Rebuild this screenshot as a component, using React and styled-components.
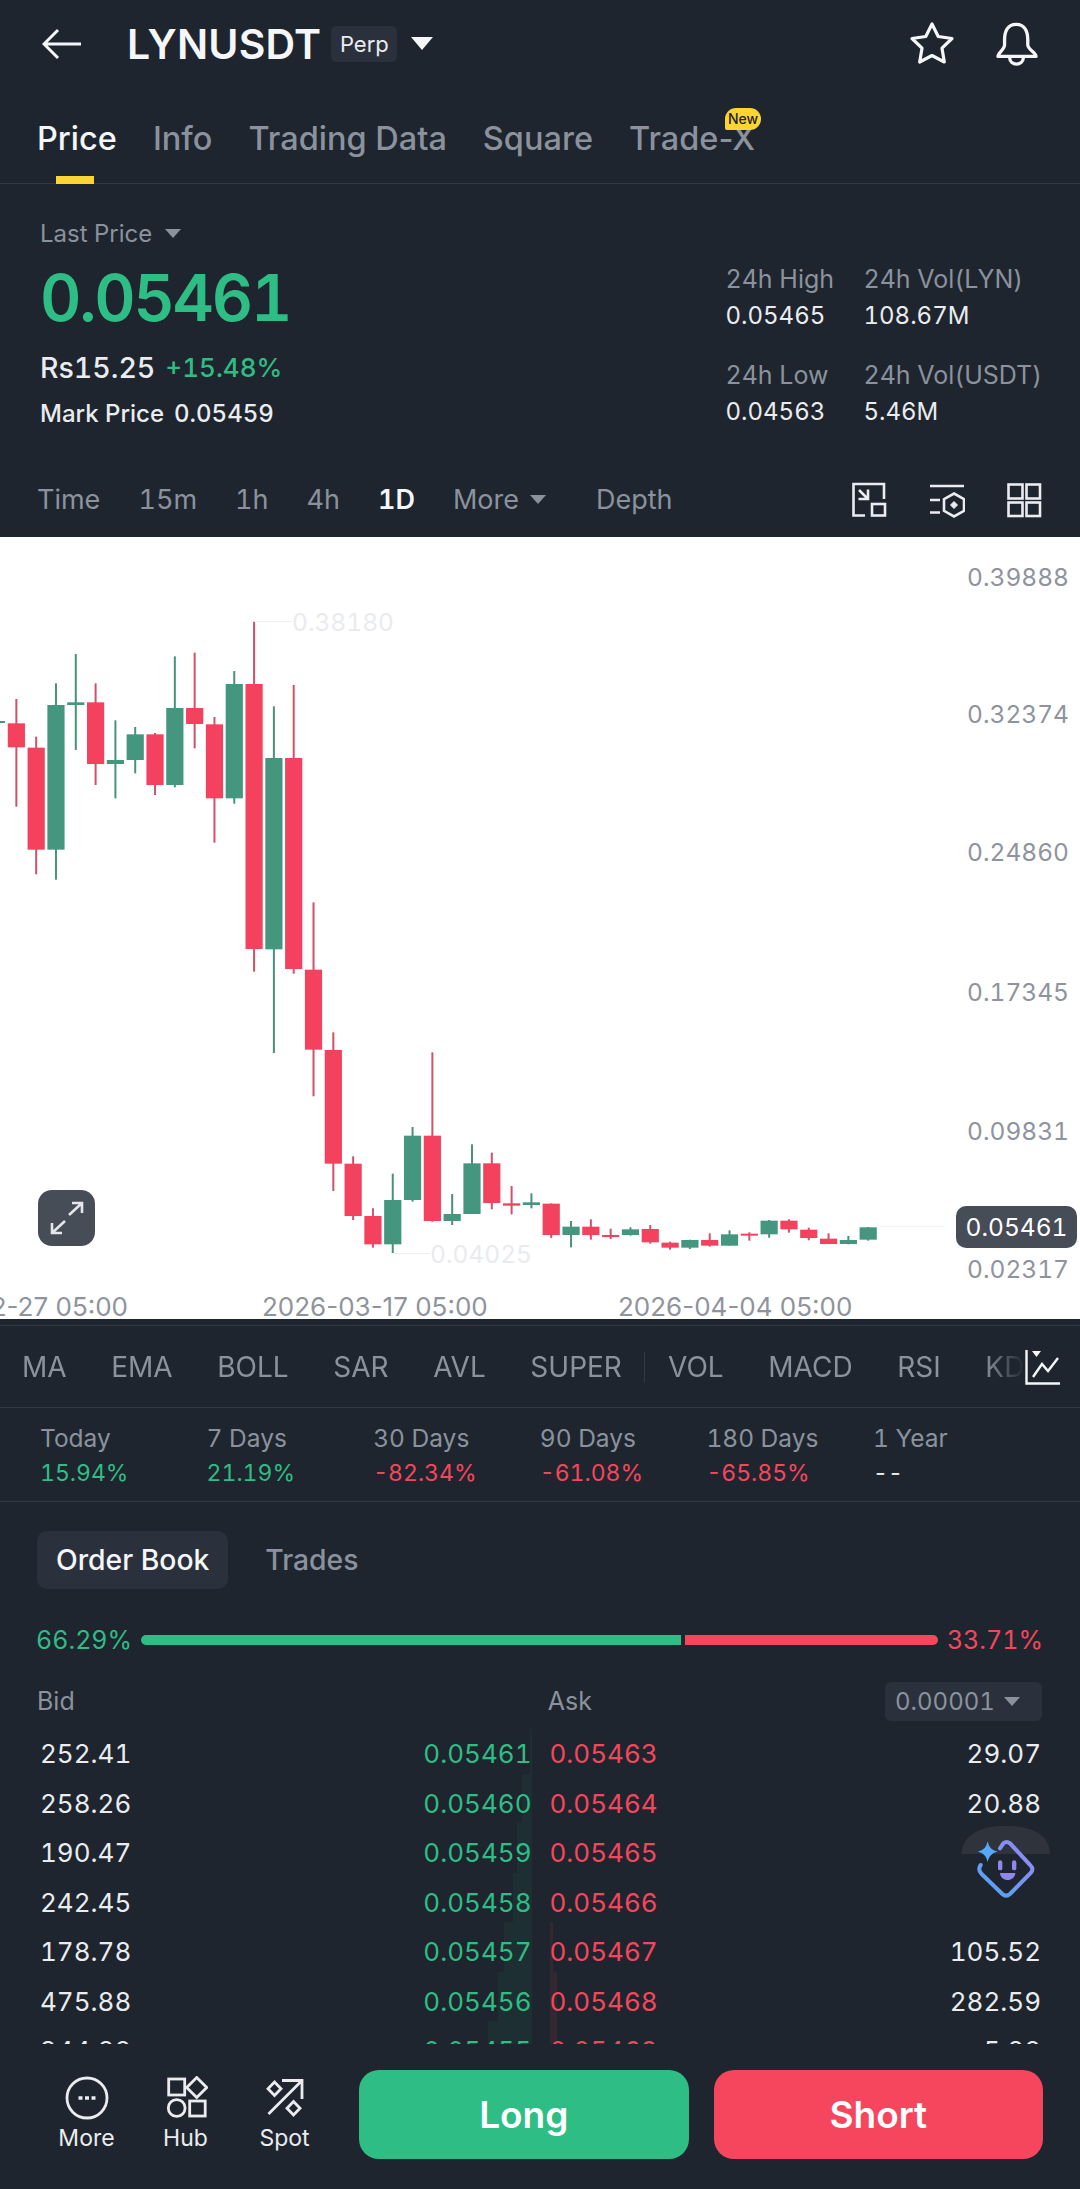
import React from 'react';
import styled, { createGlobalStyle } from 'styled-components';

const BG = '#1e252e';
const GREEN = '#2ebd85';
const RED = '#f6465d';
const GREY = '#8b929d';
const LIGHT = '#eaecef';
const CANDLE_GREEN = '#45967f';
const CANDLE_RED = '#f4425e';

const GlobalStyle = createGlobalStyle`
  html, body { margin: 0; padding: 0; background: ${BG}; }
  * { box-sizing: border-box; }
  body {
    font-family: Inter, "Liberation Sans", sans-serif;
    font-variant-numeric: tabular-nums;
    color: ${LIGHT};
  }
`;

const Page = styled.div`
  width: 1080px;
  height: 2189px;
  overflow: hidden;
  display: flex;
  flex-direction: column;
  background: ${BG};
`;

const Caret = styled.span`
  display: inline-block;
  width: 0;
  height: 0;
  border-left: ${(p) => p.$size}px solid transparent;
  border-right: ${(p) => p.$size}px solid transparent;
  border-top: ${(p) => p.$size * 1.2}px solid ${(p) => p.$color || GREY};
`;

/* header */
const Header = styled.header`
  height: 88px;
  padding: 0 39px 0 42px;
  display: flex;
  align-items: center;
`;

const Title = styled.h1`
  margin: 0 10px 0 45px;
  font-size: 41px;
  font-weight: 600;
  letter-spacing: 0.2px;
  color: #f5f6f8;
`;

const Badge = styled.span`
  height: 36px;
  width: 66px;
  margin-right: 14px;
  border-radius: 6px;
  background: #2a313c;
  color: ${LIGHT};
  font-size: 22px;
  display: flex;
  align-items: center;
  justify-content: center;
`;

const HeaderIcons = styled.div`
  margin-left: auto;
  display: flex;
  gap: 37px;
`;

/* tabs */
const Tabs = styled.nav`
  height: 96px;
  padding: 0 37px;
  display: flex;
  gap: 36px;
  border-bottom: 1px solid #333a45;
`;

const Tab = styled.div`
  position: relative;
  padding-top: 32px;
  font-size: 32.5px;
  line-height: 38px;
  font-weight: 500;
  font-variant-numeric: normal;
  color: ${(p) => (p.$active ? '#f5f6f8' : GREY)};
`;

const TabMark = styled.span`
  position: absolute;
  left: 19px;
  bottom: -1px;
  width: 38px;
  height: 8px;
  background: #fcd535;
`;

const NewTag = styled.span`
  position: absolute;
  right: -6px;
  top: 20px;
  width: 36px;
  height: 22px;
  border-radius: 11px 11px 11px 2px;
  background: #fcd535;
  color: #1e2329;
  font-size: 14px;
  font-weight: 500;
  line-height: 22px;
  text-align: center;
`;

/* price block */
const Stats = styled.section`
  height: 278px;
  padding: 35px 38px 0 40px;
  display: flex;
  justify-content: space-between;
`;

const LastPrice = styled.div`
  display: flex;
  align-items: center;
  gap: 13px;
  height: 30px;
  font-size: 24px;
  color: ${GREY};
`;

const BigPrice = styled.div`
  margin-top: 10px;
  font-size: 64px;
  line-height: 78px;
  font-weight: 600;
  letter-spacing: -2.2px;
  color: ${GREEN};
`;

const Fiat = styled.div`
  margin-top: 13px;
  height: 36px;
  display: flex;
  align-items: center;
  gap: 10px;
  font-size: 28.5px;
  font-weight: 500;
`;

const Change = styled.span`
  color: ${GREEN};
  font-size: 26px;
`;

const Mark = styled.div`
  margin-top: 12px;
  height: 32px;
  display: flex;
  align-items: center;
  gap: 10px;
  font-size: 24px;
  font-weight: 500;
`;

const RightStats = styled.div`
  padding-top: 43px;
  display: grid;
  grid-template-columns: 138px auto;
  row-gap: 25px;
  align-content: start;
`;

const StatCell = styled.div`
  display: flex;
  flex-direction: column;
  gap: 3px;
  font-size: 24px;
  line-height: 34px;
  color: ${LIGHT};
`;

const StatLabel = styled.span`
  font-size: 25px;
  color: ${GREY};
`;

/* time frames */
const TimeBar = styled.div`
  height: 76px;
  padding: 1px 38px 0 37px;
  display: flex;
  align-items: center;
  gap: 38px;
  font-size: 27px;
  color: ${GREY};
`;

const TimeItem = styled.span`
  display: flex;
  align-items: center;
  gap: 11px;
  color: ${(p) => (p.$active ? '#f5f6f8' : GREY)};
  font-weight: ${(p) => (p.$active ? 600 : 400)};
  margin-left: ${(p) => (p.$push ? '12px' : 0)};
`;

const TimeTools = styled.div`
  margin-left: auto;
  display: flex;
  gap: 41px;
`;

/* chart */
const Chart = styled.div`
  position: relative;
  height: 782px;
  background: #fff;
`;

const ChartSvg = styled.svg`
  display: block;
`;

const ChartText = styled.text`
  font-family: Inter, "Liberation Sans", sans-serif;
  font-variant-numeric: ${(p) => (p.$date ? 'normal' : 'tabular-nums')};
  font-size: ${(p) => (p.$date ? '26px' : '24.5px')};
  fill: ${(p) => p.$fill || '#8f949c'};
`;

const PriceTag = styled.div`
  position: absolute;
  right: 3px;
  top: 669px;
  width: 121px;
  height: 42px;
  border-radius: 10px;
  background: #474d57;
  color: #fff;
  font-size: 24.5px;
  line-height: 42px;
  text-align: center;
`;

const ExpandButton = styled.div`
  position: absolute;
  left: 38px;
  top: 653px;
  width: 57px;
  height: 56px;
  border-radius: 14px;
  background: #474d57;
  display: flex;
  align-items: center;
  justify-content: center;
`;

/* indicators */
const ChartFoot = styled.div`
  height: 7px;
  border-bottom: 1px solid #333a45;
`;

const IndicatorBar = styled.div`
  height: 82px;
  padding-right: 19px;
  display: flex;
  align-items: center;
  border-bottom: 1px solid #333a45;
`;

const IndicatorList = styled.div`
  flex: 1;
  min-width: 0;
  height: 100%;
  padding-left: 22px;
  display: flex;
  align-items: center;
  gap: 44.6px;
  overflow: hidden;
  font-size: 28px;
  color: ${GREY};
  -webkit-mask-image: linear-gradient(to right, #000 96%, transparent 100%);
  mask-image: linear-gradient(to right, #000 96%, transparent 100%);
`;

const IndicatorSep = styled.span`
  flex: none;
  width: 1px;
  height: 30px;
  margin: 0 -22px;
  background: #333a45;
`;

/* performance */
const PerfGrid = styled.div`
  height: 94px;
  padding: 15px 0 0 40px;
  display: grid;
  grid-template-columns: repeat(6, 166.6px);
  align-content: start;
  border-bottom: 1px solid #333a45;
`;

const PerfCell = styled.div`
  display: flex;
  flex-direction: column;
  gap: 5px;
  font-size: 24.5px;
  line-height: 30px;
  color: ${GREY};
`;

const PerfValue = styled.span`
  font-size: 23px;
  color: ${(p) => p.$color};
`;

/* order book */
const Book = styled.section`
  position: relative;
  flex: 1;
  display: flex;
  flex-direction: column;
`;

const BookTabs = styled.div`
  margin-top: 29px;
  padding-left: 37px;
  display: flex;
  align-items: center;
  gap: 37px;
`;

const BookTab = styled.div`
  height: 58px;
  padding: 0 ${(p) => (p.$active ? '19px' : 0)};
  border-radius: 10px;
  background: ${(p) => (p.$active ? '#2a313c' : 'transparent')};
  color: ${(p) => (p.$active ? '#f5f6f8' : GREY)};
  font-size: 28.3px;
  font-weight: 500;
  line-height: 58px;
`;

const RatioRow = styled.div`
  margin-top: 36px;
  padding: 0 37px 0 36px;
  height: 30px;
  display: flex;
  align-items: center;
  gap: 9px;
  font-size: 25px;
`;

const RatioBar = styled.div`
  flex: ${(p) => p.$grow};
  height: 10px;
  border-radius: ${(p) => (p.$left ? '5px 0 0 5px' : '0 5px 5px 0')};
  background: ${(p) => p.$color};
  margin-right: ${(p) => (p.$left ? '-5px' : 0)};
`;

const RatioText = styled.span`
  color: ${(p) => p.$color};
`;

const BookHead = styled.div`
  margin-top: 26px;
  height: 40px;
  padding: 0 38px 0 37px;
  display: flex;
  align-items: center;
  font-size: 25px;
  color: ${GREY};
`;

const AskHead = styled.span`
  margin-left: 473px;
`;

const Step = styled.div`
  margin-left: auto;
  width: 157px;
  height: 39px;
  padding: 0 22px 0 10px;
  border-radius: 6px;
  background: #2a313c;
  font-size: 24px;
  display: flex;
  align-items: center;
  justify-content: space-between;
`;

const Rows = styled.div`
  margin-top: 8px;
  height: 315px;
  overflow: hidden;
`;

const Row = styled.div`
  height: 49.5px;
  padding: 0 39px 0 40px;
  display: flex;
  gap: 18px;
  font-size: 26px;
`;

const Side = styled.div`
  position: relative;
  flex: 1;
  display: flex;
  align-items: center;
  justify-content: space-between;
`;

const DepthBar = styled.span`
  position: absolute;
  top: -5px;
  bottom: 5px;
  ${(p) => (p.$side === 'bid' ? 'right: 0;' : 'left: 0;')}
  background: ${(p) => (p.$side === 'bid' ? 'rgba(46,189,133,.07)' : 'rgba(246,70,93,.1)')};
`;

const Qty = styled.span`
  position: relative;
  color: ${LIGHT};
`;

const Quote = styled.span`
  position: relative;
  color: ${(p) => p.$color};
`;

const Assistant = styled.svg`
  position: absolute;
  right: 10px;
  top: 307px;
`;

/* bottom actions */
const ActionBar = styled.footer`
  height: 145px;
  flex: none;
  padding: 26px 37px 30px 0;
  display: flex;
  align-items: stretch;
  background: ${BG};
`;

const NavItems = styled.div`
  width: 359px;
  padding-left: 42px;
  display: flex;
`;

const NavItem = styled.div`
  width: 99px;
  margin-left: -5px;
  margin-right: 5px;
  padding-top: 6px;
  display: flex;
  flex-direction: column;
  align-items: center;
  gap: 4px;
  font-size: 23px;
  line-height: 28px;
  color: ${LIGHT};
`;

const TradeButton = styled.div`
  flex: 1;
  border-radius: 20px;
  background: ${(p) => p.$color};
  margin-left: ${(p) => (p.$gap ? '25px' : 0)};
  color: #fff;
  font-size: 37px;
  font-weight: 600;
  line-height: 89px;
  text-align: center;
`;

// candle data: colour, wick top, body top, body bottom, wick bottom
// read off the reference, upper set is y = 540 + v / 3, lower set y = 940 + v / 3
const upper = [
  ['r', 480, 553, 625, 803], ['r', 593, 626, 932, 1006], ['g', 433, 498, 932, 1022],
  ['g', 345, 490, 498, 633], ['r', 433, 490, 675, 738], ['g', 544, 663, 675, 778],
  ['g', 564, 586, 663, 703], ['r', 582, 586, 738, 768], ['g', 352, 507, 738, 745],
  ['r', 341, 507, 555, 628], ['r', 534, 556, 778, 911], ['g', 396, 435, 778, 794],
  ['r', 248, 435, 1230, 1298], ['g', 502, 657, 1231, 1542], ['r', 438, 657, 1290, 1304],
  ['r', 1090, 1292, 1532, 1672],
];
const lower = [
  ['r', 280, 333, 674, 756], ['r', 652, 674, 831, 843], ['r', 808, 831, 916, 926],
  ['g', 704, 783, 916, 942], ['g', 564, 590, 783, 788], ['r', 340, 590, 846, 848],
  ['g', 765, 825, 846, 858], ['g', 616, 673, 825, 825], ['r', 641, 673, 792, 811],
  ['r', 741, 793, 800, 826], ['g', 763, 790, 798, 808], ['r', 793, 794, 888, 897],
  ['g', 846, 863, 888, 925], ['r', 841, 863, 888, 902], ['r', 869, 888, 894, 900],
  ['g', 865, 871, 888, 890], ['r', 858, 870, 910, 914], ['r', 908, 911, 926, 932],
  ['g', 902, 903, 926, 930], ['r', 883, 903, 920, 923], ['g', 874, 886, 920, 920],
  ['r', 880, 884, 890, 905], ['g', 843, 845, 886, 896], ['r', 841, 845, 871, 881],
  ['r', 866, 872, 897, 904], ['r', 883, 899, 915, 915], ['g', 891, 903, 915, 916],
  ['g', 864, 865, 902, 905],
];

const CHART_TOP = 538;
const toY = (base) => (v) => base + v / 3 - CHART_TOP;
const candles = [
  ...upper.map(([c, ...v]) => [c, ...v.map(toY(540))]),
  ...lower.map(([c, ...v]) => [c, ...v.map(toY(940))]),
];

const axisLabels = [
  ['0.39888', 40], ['0.32374', 177], ['0.24860', 315],
  ['0.17345', 455], ['0.09831', 594], ['0.02317', 732],
];

const Candles = () => (
  <ChartSvg width="1080" height="782" viewBox="0 0 1080 782">
    <rect x="-8" y="184" width="13" height="2" fill={CANDLE_GREEN} />
    {candles.map(([c, wt, bt, bb, wb], i) => {
      const x = 16.36 + 19.81 * i;
      return (
        <g key={i}>
          <rect x={x - 1} y={wt} width="2" height={wb - wt} fill={c === 'g' ? '#4a917d' : '#d0526a'} />
          <rect x={x - 8.6} y={bt} width="17.2" height={Math.max(bb - bt, 2)} fill={c === 'g' ? CANDLE_GREEN : CANDLE_RED} />
        </g>
      );
    })}
    <path d="M254 84.5H292" stroke="#eceef0" strokeWidth="1" />
    <ChartText x="292" y="94" $fill="#e9ebee">0.38180</ChartText>
    <path d="M392 716.5H430" stroke="#eceef0" strokeWidth="1" />
    <ChartText x="430" y="726" $fill="#e9ebee">0.04025</ChartText>
    <path d="M880 689.5H945" stroke="#f3f4f5" strokeWidth="1" />
    {axisLabels.map(([text, y]) => (
      <ChartText key={text} x="1069" y={y + 9} textAnchor="end">{text}</ChartText>
    ))}
    <ChartText $date x="128" y="779" textAnchor="end">2-27 05:00</ChartText>
    <ChartText $date x="262" y="779">2026-03-17 05:00</ChartText>
    <ChartText $date x="618" y="779">2026-04-04 05:00</ChartText>
  </ChartSvg>
);

const BackIcon = () => (
  <svg width="40" height="32" viewBox="0 0 40 32" fill="none" stroke="#f5f6f8" strokeWidth="3">
    <path d="M39 16H2M16 2 2 16l14 14" />
  </svg>
);

const StarIcon = () => (
  <svg width="48" height="48" viewBox="0 0 48 48" fill="none" stroke="#f5f6f8" strokeWidth="3.2" strokeLinejoin="round">
    <path d="M24 4 30.2 16.5 44 18.5 34 28.2 36.3 42 24 35.5 11.7 42 14 28.2 4 18.5 17.8 16.5Z" />
  </svg>
);

const BellIcon = () => (
  <svg width="48" height="48" viewBox="310 30 145 145" fill="none" stroke="#f5f6f8" strokeWidth="10" strokeLinejoin="round">
    <path d="M380 43C352 43 345 68 345 90V105C345 120 325 128 325 140H440C440 128 415 120 415 105V90C415 68 408 43 380 43Z" />
    <path d="M360 143C362 170 400 170 402 143" />
  </svg>
);

const FitIcon = () => (
  <svg width="36" height="36" viewBox="0 0 36 36" fill="none" stroke={LIGHT} strokeWidth="2.6">
    <path d="M13 33.5H1.5V2H32V17" />
    <rect x="20" y="22" width="13" height="11.5" />
    <path d="M7 8 16 17M6.5 17H16V7.5" />
  </svg>
);

const SettingsIcon = () => (
  <svg width="36" height="36" viewBox="0 0 36 36" fill="none" stroke={LIGHT} strokeWidth="2.6">
    <path d="M1 4H35M1 18H11M1 30.5H11" />
    <path d="M25 11.5 35 17.2V28.8L25 34.5 15 28.8V17.2Z" />
    <path d="M25 19.5 28.5 23 25 26.5 21.5 23Z" fill={LIGHT} strokeWidth="1" />
  </svg>
);

const GridIcon = () => (
  <svg width="36" height="36" viewBox="0 0 36 36" fill="none" stroke={LIGHT} strokeWidth="2.6">
    <rect x="2.5" y="2.5" width="14" height="14" />
    <rect x="20.5" y="2.5" width="13.5" height="14" />
    <rect x="2.5" y="20.5" width="14" height="13.5" />
    <rect x="20.5" y="20.5" width="13.5" height="13.5" />
  </svg>
);

const ExpandIcon = () => (
  <svg width="36" height="36" viewBox="0 0 36 36" fill="none" stroke="#e4e6ea" strokeWidth="2.6">
    <path d="M20 15 33 3M23 3H33V13M16 21 3 33M3 23V33H13" />
  </svg>
);

const ChartLineIcon = () => (
  <svg width="36" height="36" viewBox="0 0 36 36" fill="none" stroke="#f5f6f8" strokeWidth="2.4" style={{ flex: 'none' }}>
    <path d="M1.5 1V34.5H35" />
    <path d="M8 28 17 15 23 22 33 9" />
    <path d="M7 2H16L11.5 8Z" fill="#f5f6f8" stroke="none" />
  </svg>
);

const MoreIcon = () => (
  <svg width="44" height="44" viewBox="0 0 44 44" fill="none" stroke={LIGHT} strokeWidth="2.8">
    <circle cx="22" cy="22" r="20" />
    <path d="M13.5 22H17.5M20 22H24M26.5 22H30.5" strokeWidth="3.6" />
  </svg>
);

const HubIcon = () => (
  <svg width="44" height="44" viewBox="0 0 44 44" fill="none" stroke={LIGHT} strokeWidth="2.8">
    <rect x="4.7" y="3" width="16" height="16" />
    <path d="M32.7 1.5 42.7 11.5 32.7 21.5 22.7 11.5Z" />
    <circle cx="12.7" cy="32" r="8.4" />
    <rect x="25.7" y="25" width="15.5" height="15" />
  </svg>
);

const SpotIcon = () => (
  <svg width="44" height="44" viewBox="0 0 44 44" fill="none" stroke={LIGHT} strokeWidth="2.8">
    <path d="M5.5 38 39 4.5M19 4.5H39V23" />
    <path d="M11.500 6 18 12.800 11.500 19.500 5 12.800Z" />
    <path d="M30.500 25.500 37 32.200 30.500 39 24 32.200Z" />
  </svg>
);

const tabs = ['Price', 'Info', 'Trading Data', 'Square', 'Trade-X'];
const times = ['Time', '15m', '1h', '4h', '1D'];
const indicators = ['MA', 'EMA', 'BOLL', 'SAR', 'AVL', 'SUPER', '|', 'VOL', 'MACD', 'RSI', 'KDJ'];
const performance = [
  ['Today', '15.94%', GREEN], ['7 Days', '21.19%', GREEN], ['30 Days', '-82.34%', RED],
  ['90 Days', '-61.08%', RED], ['180 Days', '-65.85%', RED], ['1 Year', '--', LIGHT],
];
const book = [
  ['252.41', '0.05461', 2, '0.05463', '29.07', 0],
  ['258.26', '0.05460', 10, '0.05464', '20.88', 0],
  ['190.47', '0.05459', 15, '0.05465', '63.41', 0],
  ['242.45', '0.05458', 19, '0.05466', '88.19', 0],
  ['178.78', '0.05457', 28, '0.05467', '105.52', 3],
  ['475.88', '0.05456', 34, '0.05468', '282.59', 7],
  ['344.82', '0.05455', 44, '0.05469', '5.82', 7],
];

const App = () => (
  <Page>
    <GlobalStyle />
    <Header>
      <BackIcon />
      <Title>LYNUSDT</Title>
      <Badge>Perp</Badge>
      <Caret $size={11} $color="#f5f6f8" />
      <HeaderIcons>
        <StarIcon />
        <BellIcon />
      </HeaderIcons>
    </Header>

    <Tabs>
      {tabs.map((t, i) => (
        <Tab key={t} $active={i === 0}>
          {t}
          {i === 0 && <TabMark />}
          {t === 'Trade-X' && <NewTag>New</NewTag>}
        </Tab>
      ))}
    </Tabs>

    <Stats>
      <div>
        <LastPrice>Last Price <Caret $size={8} /></LastPrice>
        <BigPrice>0.05461</BigPrice>
        <Fiat>Rs15.25 <Change>+15.48%</Change></Fiat>
        <Mark>Mark Price <span>0.05459</span></Mark>
      </div>
      <RightStats>
        <StatCell><StatLabel>24h High</StatLabel>0.05465</StatCell>
        <StatCell><StatLabel>24h Vol(LYN)</StatLabel>108.67M</StatCell>
        <StatCell><StatLabel>24h Low</StatLabel>0.04563</StatCell>
        <StatCell><StatLabel>24h Vol(USDT)</StatLabel>5.46M</StatCell>
      </RightStats>
    </Stats>

    <TimeBar>
      {times.map((t) => (
        <TimeItem key={t} $active={t === '1D'}>{t}</TimeItem>
      ))}
      <TimeItem>More <Caret $size={8} /></TimeItem>
      <TimeItem $push>Depth</TimeItem>
      <TimeTools>
        <FitIcon />
        <SettingsIcon />
        <GridIcon />
      </TimeTools>
    </TimeBar>

    <Chart>
      <Candles />
      <PriceTag>0.05461</PriceTag>
      <ExpandButton><ExpandIcon /></ExpandButton>
    </Chart>
    <ChartFoot />

    <IndicatorBar>
      <IndicatorList>
        {indicators.map((t) => (t === '|' ? <IndicatorSep key={t} /> : <span key={t}>{t}</span>))}
      </IndicatorList>
      <ChartLineIcon />
    </IndicatorBar>

    <PerfGrid>
      {performance.map(([label, value, color]) => (
        <PerfCell key={label}>
          {label}
          <PerfValue $color={color}>{value}</PerfValue>
        </PerfCell>
      ))}
    </PerfGrid>

    <Book>
      <BookTabs>
        <BookTab $active>Order Book</BookTab>
        <BookTab>Trades</BookTab>
      </BookTabs>
      <RatioRow>
        <RatioText $color={GREEN}>66.29%</RatioText>
        <RatioBar $grow={540} $left $color={GREEN} />
        <RatioBar $grow={253} $color={RED} />
        <RatioText $color={RED}>33.71%</RatioText>
      </RatioRow>
      <BookHead>
        <span>Bid</span>
        <AskHead>Ask</AskHead>
        <Step>0.00001 <Caret $size={8} /></Step>
      </BookHead>
      <Rows>
        {book.map(([bid, bidPrice, bidDepth, askPrice, ask, askDepth]) => (
          <Row key={bidPrice}>
            <Side>
              <DepthBar $side="bid" style={{ width: bidDepth }} />
              <Qty>{bid}</Qty>
              <Quote $color={GREEN}>{bidPrice}</Quote>
            </Side>
            <Side>
              <DepthBar $side="ask" style={{ width: askDepth }} />
              <Quote $color={RED}>{askPrice}</Quote>
              <Qty>{ask}</Qty>
            </Side>
          </Row>
        ))}
      </Rows>
      <Assistant width="130" height="120" viewBox="0 0 390 360" fill="none">
        <defs>
          <linearGradient id="faceStroke" x1="110" y1="260" x2="290" y2="100" gradientUnits="userSpaceOnUse">
            <stop offset="0" stopColor="#4ea6f5" />
            <stop offset="1" stopColor="#9a86f2" />
          </linearGradient>
        </defs>
        <rect x="55" y="45" width="285" height="270" rx="8" fill={BG} />
        <path d="M65 135C65 85 110 50 198 50S330 85 330 135Z" fill="#2e333c" />
        <path d="M180 118 190 103Q200 95 210 103L272 170Q282 180 272 192L210 255Q198 265 187 255L125 195Q112 182 122 168" stroke="url(#faceStroke)" strokeWidth="12" strokeLinecap="round" />
        <path d="M143 97C147 115 155 124 173 128 155 132 147 141 143 159 139 141 131 132 113 128 131 124 139 115 143 97Z" fill="#55a9f7" />
        <rect x="174" y="154" width="13" height="30" rx="6.500" fill="#8f86ee" />
        <rect x="216" y="154" width="13" height="30" rx="6.500" fill="#8f86ee" />
        <path d="M180 192H226C224 220 182 220 180 192Z" fill="#8f86ee" />
      </Assistant>
    </Book>

    <ActionBar>
      <NavItems>
        <NavItem><MoreIcon />More</NavItem>
        <NavItem><HubIcon />Hub</NavItem>
        <NavItem><SpotIcon />Spot</NavItem>
      </NavItems>
      <TradeButton $color={GREEN}>Long</TradeButton>
      <TradeButton $color={RED} $gap>Short</TradeButton>
    </ActionBar>
  </Page>
);

export default App;
